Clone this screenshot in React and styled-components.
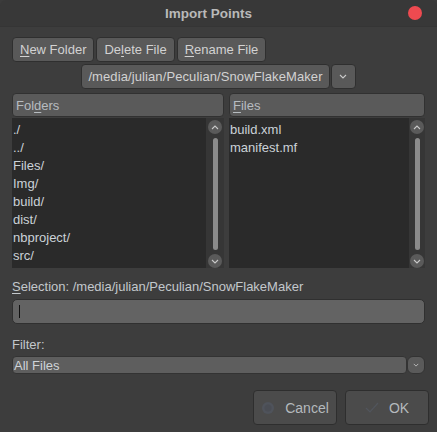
import React from "react";
import styled, { createGlobalStyle } from "styled-components";

const Global = createGlobalStyle`
  html, body {
    margin: 0;
    padding: 0;
    background: #3b3b3b;
  }
  * { box-sizing: border-box; }
`;

const Window = styled.div`
  width: 437px;
  height: 432px;
  background: #3d3d3d;
  border-radius: 6px 6px 0 0;
  overflow: hidden;
  display: flex;
  flex-direction: column;
  font-family: "Liberation Sans", "DejaVu Sans", sans-serif;
  font-size: 13px;
  color: #c9ced3;
`;

const TitleBar = styled.div`
  height: 27px;
  flex: none;
  display: flex;
  align-items: center;
  background: #383838;
  border-bottom: 1px solid #353535;
`;

const Title = styled.div`
  flex: 1;
  text-align: center;
  padding-left: 9px;
  font-weight: bold;
  font-size: 13.5px;
  color: #b9b9b9;
`;

const CloseDot = styled.div`
  width: 14px;
  height: 14px;
  border-radius: 50%;
  background: #ee4a50;
  margin-right: 15px;
`;

const Body = styled.div`
  flex: 1;
  display: flex;
  flex-direction: column;
  padding: 10px 12px 0 12px;
`;

const Toolbar = styled.div`
  display: flex;
  gap: 2px;
`;

const ToolButton = styled.div`
  height: 25px;
  padding: 0 7px;
  display: flex;
  align-items: center;
  background: #595959;
  border: 1px solid #2f2f2f;
  border-radius: 4px;
  color: #d2d2d2;
`;

const U = styled.span`
  text-decoration: underline;
  text-underline-offset: 2px;
`;

const PathRow = styled.div`
  display: flex;
  justify-content: center;
  gap: 1px;
  margin-top: 2px;
`;

const PathBox = styled(ToolButton)`
  padding: 0 6px;
  letter-spacing: 0.1px;
`;

const SmallDrop = styled(ToolButton)`
  width: 25px;
  justify-content: center;
  padding: 0;
`;

const Panels = styled.div`
  display: grid;
  grid-template-columns: 212px 1fr;
  gap: 5px;
  margin-top: 4px;
`;

const Panel = styled.div`
  display: flex;
  flex-direction: column;
`;

const Header = styled.div`
  height: 24px;
  display: flex;
  align-items: center;
  padding-left: 3px;
  background: #5a5a5a;
  border: 1px solid #313131;
  border-radius: 4px;
  color: #b7bcc0;
`;

const ListArea = styled.div`
  height: 150px;
  display: flex;
  margin-top: 1px;
  background: #333333;
`;

const List = styled.div`
  flex: 1;
  background: #2a2a2a;
  padding-top: 3px;
`;

const Item = styled.div`
  height: 18px;
  line-height: 18px;
  padding-left: 1px;
  color: #cbd2d8;
`;

const ScrollCol = styled.div`
  width: ${(p) => p.$w}px;
  display: flex;
  flex-direction: column;
  align-items: center;
  padding: 2px 0 0 0;
  background: #363636;
`;

const ArrowBtn = styled.div`
  width: 14px;
  height: 14px;
  border-radius: 50%;
  background: #5a5a5a;
  display: flex;
  align-items: center;
  justify-content: center;
  flex: none;
`;

const Track = styled.div`
  flex: 1;
  width: 5px;
  margin: 4px 0;
  border-radius: 3px;
  background: #8b8b8b;
`;

const FieldLabel = styled.div`
  margin-top: ${(p) => p.$mt}px;
  height: 16px;
  line-height: 16px;
  color: #c3c8cc;
`;

const Input = styled.div`
  height: 25px;
  margin-top: 4px;
  display: flex;
  align-items: center;
  padding-left: 6px;
  background: #636363;
  border: 1px solid #303030;
  border-radius: 5px;
`;

const Caret = styled.div`
  width: 1px;
  height: 13px;
  background: #111;
`;

const FilterRow = styled.div`
  display: flex;
  margin-top: 3px;
  height: 18px;
`;

const FilterBox = styled.div`
  flex: 1;
  display: flex;
  align-items: center;
  padding-left: 1px;
  background: #5e5e5e;
  border: 1px solid #333;
  border-radius: 4px;
  color: #cfd4d8;
`;

const FilterDrop = styled.div`
  width: 18px;
  display: flex;
  align-items: center;
  justify-content: center;
  background: #5a5a5a;
  border: 1px solid #333;
  border-radius: 6px;
`;

const Footer = styled.div`
  display: flex;
  justify-content: flex-end;
  gap: 8px;
  margin-top: 16px;
  margin-right: -4px;
`;

const DialogButton = styled.div`
  width: 84px;
  height: 35px;
  display: flex;
  align-items: center;
  justify-content: center;
  gap: 10px;
  background: #4b4b4b;
  border: 1px solid #2e2e2e;
  border-radius: 4px;
  color: #b4b9bd;
  font-size: 14px;
`;

const Chevron = ({ up, size = 8, color = "#c8c8c8" }) => (
  <svg width={size} height={size / 2 + 1} viewBox="0 0 8 5">
    <path
      d={up ? "M1 4 L4 1 L7 4" : "M1 1 L4 4 L7 1"}
      fill="none"
      stroke={color}
      strokeWidth="1.1"
    />
  </svg>
);

const ScrollBar = ({ w }) => (
  <ScrollCol $w={w}>
    <ArrowBtn>
      <Chevron up />
    </ArrowBtn>
    <Track />
    <ArrowBtn>
      <Chevron />
    </ArrowBtn>
  </ScrollCol>
);

const folders = ["./", "../", "Files/", "Img/", "build/", "dist/", "nbproject/", "src/"];
const files = ["build.xml", "manifest.mf"];

export default function App() {
  return (
    <>
      <Global />
      <Window>
        <TitleBar>
          <Title>Import Points</Title>
          <CloseDot />
        </TitleBar>
        <Body>
          <Toolbar>
            <ToolButton>
              <U>N</U>ew Folder
            </ToolButton>
            <ToolButton>
              De<U>l</U>ete File
            </ToolButton>
            <ToolButton>
              <U>R</U>ename File
            </ToolButton>
          </Toolbar>
          <PathRow>
            <PathBox>/media/julian/Peculian/SnowFlakeMaker</PathBox>
            <SmallDrop>
              <Chevron />
            </SmallDrop>
          </PathRow>
          <Panels>
            <Panel>
              <Header>
                Fol<U>d</U>ers
              </Header>
              <ListArea>
                <List>
                  {folders.map((f) => (
                    <Item key={f}>{f}</Item>
                  ))}
                </List>
                <ScrollBar w={18} />
              </ListArea>
            </Panel>
            <Panel>
              <Header>
                <U>F</U>iles
              </Header>
              <ListArea>
                <List>
                  {files.map((f) => (
                    <Item key={f}>{f}</Item>
                  ))}
                </List>
                <ScrollBar w={16} />
              </ListArea>
            </Panel>
          </Panels>
          <FieldLabel $mt={11}>
            <U>S</U>election: /media/julian/Peculian/SnowFlakeMaker
          </FieldLabel>
          <Input>
            <Caret />
          </Input>
          <FieldLabel $mt={13}>Filter:</FieldLabel>
          <FilterRow>
            <FilterBox>All Files</FilterBox>
            <FilterDrop>
              <Chevron size={6} />
            </FilterDrop>
          </FilterRow>
          <Footer>
            <DialogButton>
              <svg width="14" height="14" viewBox="0 0 14 14">
                <circle cx="7" cy="7" r="6" fill="#4f535b" />
                <circle cx="7" cy="7" r="3.5" fill="#4a4d54" />
              </svg>
              Cancel
            </DialogButton>
            <DialogButton>
              <svg width="14" height="12" viewBox="0 0 14 12">
                <path d="M1 6 L5 10 L13 1" fill="none" stroke="#51555c" strokeWidth="1.2" />
              </svg>
              OK
            </DialogButton>
          </Footer>
        </Body>
      </Window>
    </>
  );
}
